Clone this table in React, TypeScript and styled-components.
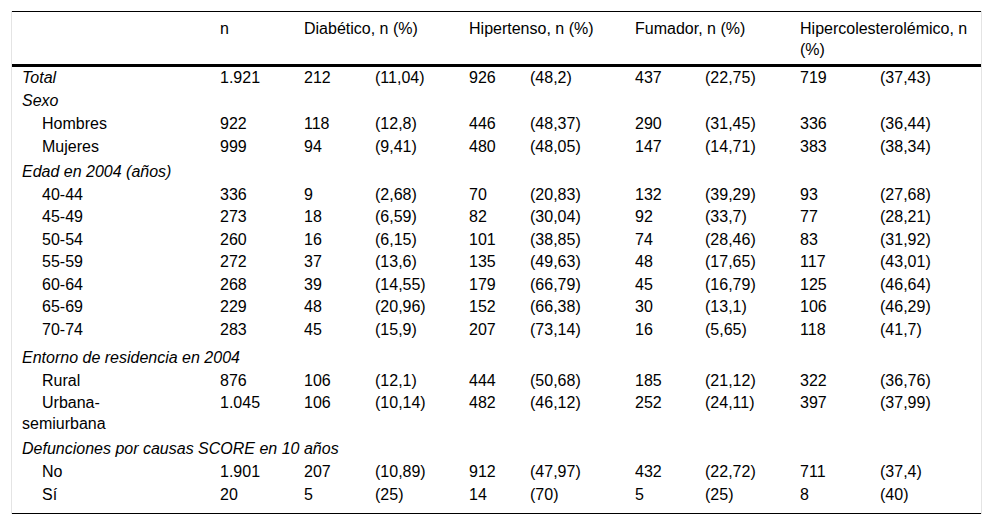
import styled, { createGlobalStyle } from 'styled-components'

const GlobalStyle = createGlobalStyle`
  body {
    margin: 0;
    background: #fff;
    font-family: "Liberation Sans", Arial, sans-serif;
    color: #000;
  }
`

type Kind = 'total' | 'sub' | 'section'

type DataRow = {
  label: string
  kind: Kind
  values?: string[]
  top?: number
}

const rows: DataRow[] = [
  { label: 'Total', kind: 'total', values: ['1.921', '212', '(11,04)', '926', '(48,2)', '437', '(22,75)', '719', '(37,43)'] },
  { label: 'Sexo', kind: 'section', top: 1.5 },
  { label: 'Hombres', kind: 'sub', values: ['922', '118', '(12,8)', '446', '(48,37)', '290', '(31,45)', '336', '(36,44)'] },
  { label: 'Mujeres', kind: 'sub', values: ['999', '94', '(9,41)', '480', '(48,05)', '147', '(14,71)', '383', '(38,34)'] },
  { label: 'Edad en 2004 (años)', kind: 'section', top: 3.5 },
  { label: '40-44', kind: 'sub', values: ['336', '9', '(2,68)', '70', '(20,83)', '132', '(39,29)', '93', '(27,68)'] },
  { label: '45-49', kind: 'sub', values: ['273', '18', '(6,59)', '82', '(30,04)', '92', '(33,7)', '77', '(28,21)'] },
  { label: '50-54', kind: 'sub', values: ['260', '16', '(6,15)', '101', '(38,85)', '74', '(28,46)', '83', '(31,92)'] },
  { label: '55-59', kind: 'sub', values: ['272', '37', '(13,6)', '135', '(49,63)', '48', '(17,65)', '117', '(43,01)'] },
  { label: '60-64', kind: 'sub', values: ['268', '39', '(14,55)', '179', '(66,79)', '45', '(16,79)', '125', '(46,64)'] },
  { label: '65-69', kind: 'sub', values: ['229', '48', '(20,96)', '152', '(66,38)', '30', '(13,1)', '106', '(46,29)'] },
  { label: '70-74', kind: 'sub', values: ['283', '45', '(15,9)', '207', '(73,14)', '16', '(5,65)', '118', '(41,7)'] },
  { label: 'Entorno de residencia en 2004', kind: 'section', top: 6.5 },
  { label: 'Rural', kind: 'sub', values: ['876', '106', '(12,1)', '444', '(50,68)', '185', '(21,12)', '322', '(36,76)'] },
  { label: 'Urbana-semiurbana', kind: 'sub', values: ['1.045', '106', '(10,14)', '482', '(46,12)', '252', '(24,11)', '397', '(37,99)'] },
  { label: 'Defunciones por causas SCORE en 10 años', kind: 'section', top: 4 },
  { label: 'No', kind: 'sub', values: ['1.901', '207', '(10,89)', '912', '(47,97)', '432', '(22,72)', '711', '(37,4)'] },
  { label: 'Sí', kind: 'sub', values: ['20', '5', '(25)', '14', '(70)', '5', '(25)', '8', '(40)'] },
]

const colWidths = [197, 84, 71, 94, 61, 105, 70, 95, 80, 112]

const Frame = styled.div`
  margin: 11px 0 0 11px;
  width: 969px;
  border-left: 1px solid #e4e4e4;
  border-right: 1px solid #e4e4e4;
`

const Table = styled.table`
  width: 969px;
  table-layout: fixed;
  border-collapse: collapse;
  font-size: 16px;
  border-top: 1px solid #000;
  border-bottom: 1px solid #000;
`

const HeadRow = styled.tr`
  border-bottom: 3px solid #000;
`

const HeadCell = styled.th`
  text-align: left;
  vertical-align: top;
  font-weight: 400;
  line-height: 21px;
  padding: 6px 12px 4px 11px;
`

const BodyRow = styled.tr`
  &:first-child td {
    padding-top: 1px;
  }
  &:last-child td {
    padding-bottom: 8px;
  }
`

const Cell = styled.td`
  vertical-align: top;
  line-height: 20.5px;
  padding: 1px 10px 1px 11px;
  white-space: nowrap;
`

const LabelCell = styled.td<{ $kind: Kind; $top?: number }>`
  vertical-align: top;
  line-height: 20.5px;
  padding: ${p => (p.$kind === 'section' ? `${p.$top ?? 3.5}px 10px 1.5px 10px` : '1px 45px 1px 10px')};
  font-style: ${p => (p.$kind === 'sub' ? 'normal' : 'italic')};
  text-indent: ${p => (p.$kind === 'sub' ? '20px' : '0')};
  white-space: ${p => (p.$kind === 'section' ? 'nowrap' : 'normal')};
`

export default function App() {
  return (
    <>
      <GlobalStyle />
      <Frame>
        <Table>
          <colgroup>
            {colWidths.map((w, i) => (
              <col key={i} style={{ width: w }} />
            ))}
          </colgroup>
          <thead>
            <HeadRow>
              <HeadCell />
              <HeadCell>n</HeadCell>
              <HeadCell colSpan={2}>Diabético, n (%)</HeadCell>
              <HeadCell colSpan={2}>Hipertenso, n (%)</HeadCell>
              <HeadCell colSpan={2}>Fumador, n (%)</HeadCell>
              <HeadCell colSpan={2}>Hipercolesterolémico, n (%)</HeadCell>
            </HeadRow>
          </thead>
          <tbody>
            {rows.map(row =>
              row.kind === 'section' ? (
                <BodyRow key={row.label}>
                  <LabelCell $kind="section" $top={row.top} colSpan={10}>
                    {row.label}
                  </LabelCell>
                </BodyRow>
              ) : (
                <BodyRow key={row.label}>
                  <LabelCell $kind={row.kind}>{row.label}</LabelCell>
                  {row.values!.map((v, i) => (
                    <Cell key={i}>{v}</Cell>
                  ))}
                </BodyRow>
              )
            )}
          </tbody>
        </Table>
      </Frame>
    </>
  )
}
